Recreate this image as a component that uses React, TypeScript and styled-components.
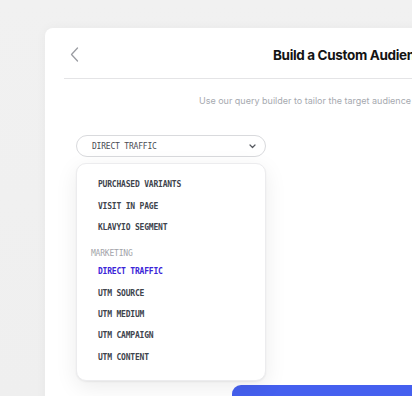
import React from "react";
import styled, { createGlobalStyle } from "styled-components";

const Global = createGlobalStyle`
  html, body { margin: 0; padding: 0; }
  body {
    width: 412px;
    height: 396px;
    overflow: hidden;
    background: linear-gradient(180deg, #f1f1f1 0%, #efefef 100%);
    font-family: Inter, "Noto Sans", sans-serif;
  }
`;

const Page = styled.div`
  width: 412px;
  height: 396px;
  overflow: hidden;
  padding: 28px 0 0 45px;
  box-sizing: border-box;
`;

const Card = styled.div`
  width: 600px;
  height: 420px;
  background: #ffffff;
  border-radius: 8px 0 0 0;
  box-shadow: 0 0 12px rgba(0, 0, 0, 0.04);
  padding-left: 19px;
  box-sizing: border-box;
`;

const Header = styled.div`
  height: 51px;
  display: flex;
  align-items: center;
  padding-left: 6px;
  border-bottom: 1px solid #e4e4e6;
  box-sizing: border-box;
`;

const Back = styled.button`
  border: 0;
  background: none;
  padding: 0;
  width: 9px;
  height: 15px;
  display: flex;
  margin-top: 3px;
  cursor: pointer;
`;

const Title = styled.h1`
  margin: 4px 0 0 194px;
  font-size: 13.5px;
  font-weight: 700;
  color: #141414;
  letter-spacing: -0.35px;
  white-space: nowrap;
`;

const Subtitle = styled.p`
  margin: 0;
  padding: 15px 0 0 135px;
  font-size: 9px;
  line-height: 14px;
  color: #a6a9af;
  white-space: nowrap;
`;

const Body = styled.div`
  padding: 27px 0 0 12px;
  position: relative;
`;

const SelectWrap = styled.div`
  position: relative;
  width: 190px;
`;

const Select = styled.div`
  height: 22px;
  border: 1px solid #d9dadd;
  border-radius: 11px;
  box-sizing: border-box;
  display: flex;
  align-items: center;
  justify-content: space-between;
  padding: 0 9px 0 15px;
  background: #fff;
`;

const mono = `"DejaVu Sans Mono", "Liberation Mono", monospace`;

const SelectText = styled.span`
  font-family: ${mono};
  font-size: 8px;
  letter-spacing: -0.2px;
  color: #4a4d55;
`;

const Menu = styled.div`
  position: absolute;
  top: 28px;
  left: 0;
  width: 190px;
  box-sizing: border-box;
  background: #fff;
  border: 1px solid #ececee;
  border-radius: 10px;
  box-shadow: 0 6px 22px rgba(0, 0, 0, 0.08), 0 1px 2px rgba(0, 0, 0, 0.06);
  padding: 10px 0 12px;
  z-index: 2;
`;

const Item = styled.div<{ $active?: boolean }>`
  height: 21.4px;
  display: flex;
  align-items: center;
  padding-left: 21px;
  font-family: ${mono};
  font-size: 8px;
  letter-spacing: -0.2px;
  font-weight: 700;
  color: ${(p) => (p.$active ? "#3a24d8" : "#40444d")};
`;

const Group = styled.div`
  height: 14px;
  margin-top: 8.8px;
  display: flex;
  align-items: center;
  padding-left: 14px;
  font-family: ${mono};
  font-size: 8px;
  letter-spacing: -0.2px;
  color: #a2a4a9;
`;

const Footer = styled.div`
  padding: 228px 0 0 156px;
`;

const Primary = styled.button`
  width: 260px;
  height: 40px;
  border: 0;
  border-radius: 9px;
  background: #4560ef;
`;

const first = ["PURCHASED VARIANTS", "VISIT IN PAGE", "KLAVYIO SEGMENT"];
const marketing = ["DIRECT TRAFFIC", "UTM SOURCE", "UTM MEDIUM", "UTM CAMPAIGN", "UTM CONTENT"];

export default function App() {
  return (
    <>
      <Global />
      <Page>
        <Card>
          <Header>
            <Back aria-label="Back">
              <svg width="9" height="15" viewBox="0 0 9 15" fill="none">
                <path d="M7.5 1 L1.5 7.5 L7.5 14" stroke="#9a9ca2" strokeWidth="1.3" strokeLinecap="round" strokeLinejoin="round" />
              </svg>
            </Back>
            <Title>Build a Custom Audience</Title>
          </Header>
          <Subtitle>Use our query builder to tailor the target audience</Subtitle>
          <Body>
            <SelectWrap>
              <Select>
                <SelectText>DIRECT TRAFFIC</SelectText>
                <svg width="7" height="5" viewBox="0 0 7 5" fill="none">
                  <path d="M1 1 L3.5 3.5 L6 1" stroke="#55585f" strokeWidth="1.2" strokeLinecap="round" strokeLinejoin="round" />
                </svg>
              </Select>
              <Menu>
                {first.map((t) => (
                  <Item key={t}>{t}</Item>
                ))}
                <Group>MARKETING</Group>
                {marketing.map((t) => (
                  <Item key={t} $active={t === "DIRECT TRAFFIC"}>
                    {t}
                  </Item>
                ))}
              </Menu>
            </SelectWrap>
            <Footer>
              <Primary />
            </Footer>
          </Body>
        </Card>
      </Page>
    </>
  );
}
